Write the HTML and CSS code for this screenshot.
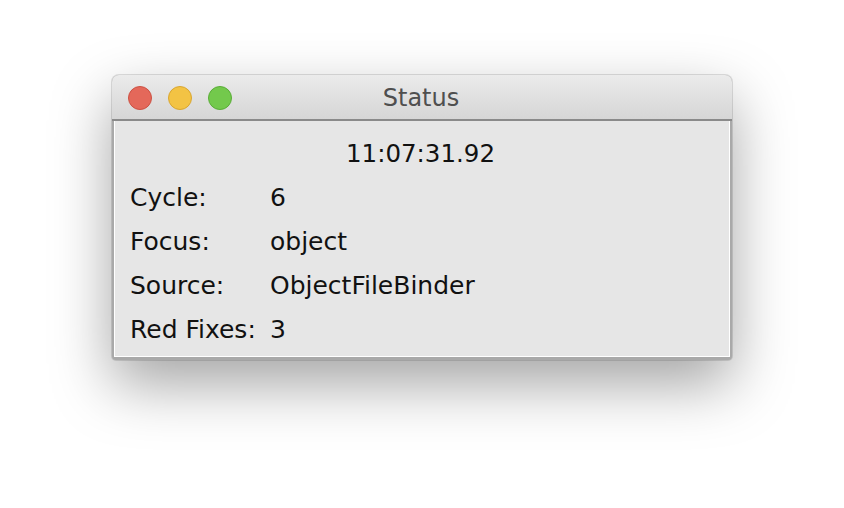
FILE: index.html
```html
<!DOCTYPE html>
<html>
<head>
<meta charset="utf-8">
<link rel="stylesheet" href="styles.css">
</head>
<body>
<div class="stage">
  <div class="window">
    <div class="titlebar">
      <div class="lights">
        <span class="light red"></span>
        <span class="light yellow"></span>
        <span class="light green"></span>
      </div>
      <div class="title">Status</div>
    </div>
    <div class="content">
      <div class="time">11:07:31.92</div>
      <div class="row"><span class="label">Cycle:</span><span class="value">6</span></div>
      <div class="row"><span class="label">Focus:</span><span class="value">object</span></div>
      <div class="row"><span class="label">Source:</span><span class="value">ObjectFileBinder</span></div>
      <div class="row"><span class="label">Red Fixes:</span><span class="value">3</span></div>
    </div>
  </div>
</div>
</body>
</html>
```

FILE: styles.css
```css
html, body {
  margin: 0;
  padding: 0;
  background: #ffffff;
}
body {
  width: 844px;
  height: 508px;
  overflow: hidden;
  font-family: "DejaVu Sans", sans-serif;
}
.stage {
  padding: 75px 0 0 112px;
}
.window {
  width: 620px;
  height: 285px;
  box-sizing: border-box;
  background: #a9a9a9;
  border-radius: 7px 7px 4px 4px;
  box-shadow: 0 24px 60px rgba(0, 0, 0, 0.36), 0 0 0 1px rgba(0, 0, 0, 0.12);
  display: flex;
  flex-direction: column;
  overflow: hidden;
}
.titlebar {
  height: 44px;
  flex: none;
  position: relative;
  background: linear-gradient(#ebebeb, #d6d6d6);
  border-bottom: 2px solid #8a8a8a;
  display: flex;
  align-items: center;
  justify-content: center;
}
.lights {
  position: absolute;
  left: 16px;
  top: 11px;
  display: flex;
  gap: 16px;
}
.light {
  width: 22px;
  height: 22px;
  border-radius: 50%;
  border: 1px solid transparent;
}
.red { background: #e4685a; border-color: #cc5143; }
.yellow { background: #f3c344; border-color: #d9a631; }
.green { background: #73c94c; border-color: #5aad38; }
.title {
  font-size: 24px;
  color: #4f4f4f;
  margin-left: -2px;
  margin-top: 2px;
}
.content {
  flex: 1;
  margin: 0 2px 3px 2px;
  background: #e6e6e6;
  border-left: 1px solid #ffffff;
  border-right: 1px solid #ffffff;
  border-bottom: 1px solid #ffffff;
  padding: 11px 0 0 15px;
  color: #111111;
  font-size: 25px;
}
.time {
  font-size: 24.5px;
  line-height: 44px;
  height: 44px;
  text-align: center;
  padding-right: 15px;
  margin-left: -3px;
}
.row {
  display: flex;
  line-height: 44px;
  height: 44px;
}
.label {
  width: 140px;
  flex: none;
}
```
